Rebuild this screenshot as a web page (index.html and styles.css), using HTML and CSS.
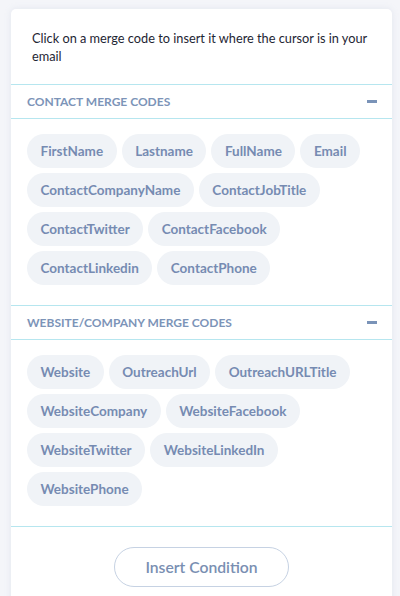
FILE: index.html
```html
<!DOCTYPE html>
<html>
<head>
<meta charset="utf-8">
<link rel="stylesheet" href="styles.css">
</head>
<body>
<div class="page">
  <div class="card">
    <p class="intro">Click on a merge code to insert it where the cursor is in your email</p>
    <div class="section-head">
      <span class="section-title">Contact Merge Codes</span>
      <span class="minus"></span>
    </div>
    <div class="chips">
      <span class="chip">FirstName</span>
      <span class="chip">Lastname</span>
      <span class="chip">FullName</span>
      <span class="chip">Email</span>
      <span class="chip">ContactCompanyName</span>
      <span class="chip">ContactJobTitle</span>
      <span class="chip">ContactTwitter</span>
      <span class="chip">ContactFacebook</span>
      <span class="chip">ContactLinkedin</span>
      <span class="chip">ContactPhone</span>
    </div>
    <div class="section-head">
      <span class="section-title">Website/Company Merge Codes</span>
      <span class="minus"></span>
    </div>
    <div class="chips">
      <span class="chip">Website</span>
      <span class="chip">OutreachUrl</span>
      <span class="chip">OutreachURLTitle</span>
      <span class="chip">WebsiteCompany</span>
      <span class="chip">WebsiteFacebook</span>
      <span class="chip">WebsiteTwitter</span>
      <span class="chip">WebsiteLinkedIn</span>
      <span class="chip">WebsitePhone</span>
    </div>
    <div class="footer">
      <button class="insert-btn">Insert Condition</button>
    </div>
  </div>
</div>
</body>
</html>
```
FILE: styles.css
```css
html, body {
  margin: 0;
  padding: 0;
  background: #f4f5f9;
  font-family: Lato, "Open Sans", sans-serif;
  height: 596px;
  overflow: hidden;
}
.page {
  padding: 9px 8px 0 11px;
}
.card {
  width: 381px;
  background: #ffffff;
  border-radius: 5px;
  box-shadow: 0 0 6px rgba(180, 190, 210, 0.25);
  height: 620px;
}
.intro {
  margin: 0;
  padding: 20px 12px 19px 21px;
  font-size: 12.75px;
  line-height: 18px;
  color: #1e2533;
}
.section-head {
  display: flex;
  align-items: center;
  justify-content: space-between;
  height: 33px;
  padding: 0 15px 0 16px;
  border-top: 1px solid #b6e6ef;
  border-bottom: 1px solid #b6e6ef;
}
.section-title {
  text-transform: uppercase;
  font-weight: 700;
  font-size: 12px;
  color: #7c94b8;
}
.minus {
  width: 10px;
  height: 2.5px;
  background: #7a93b8;
}
.chips {
  display: flex;
  flex-wrap: wrap;
  gap: 5px;
  padding: 15px 16px 20px 16px;
}
.chip {
  display: inline-flex;
  align-items: center;
  height: 34px;
  padding: 0 13.5px;
  border-radius: 17px;
  background: #f0f3f7;
  color: #768bb2;
  font-weight: 700;
  font-size: 13.5px;
}
.footer {
  border-top: 1px solid #b6e6ef;
  display: flex;
  justify-content: center;
  padding-top: 20px;
}
.insert-btn {
  width: 175px;
  height: 40px;
  border: 1px solid #c6d2e3;
  border-radius: 20px;
  background: #ffffff;
  color: #7a8fb2;
  font-family: Lato, "Open Sans", sans-serif;
  font-size: 15.7px;
  font-weight: 600;
}
```
